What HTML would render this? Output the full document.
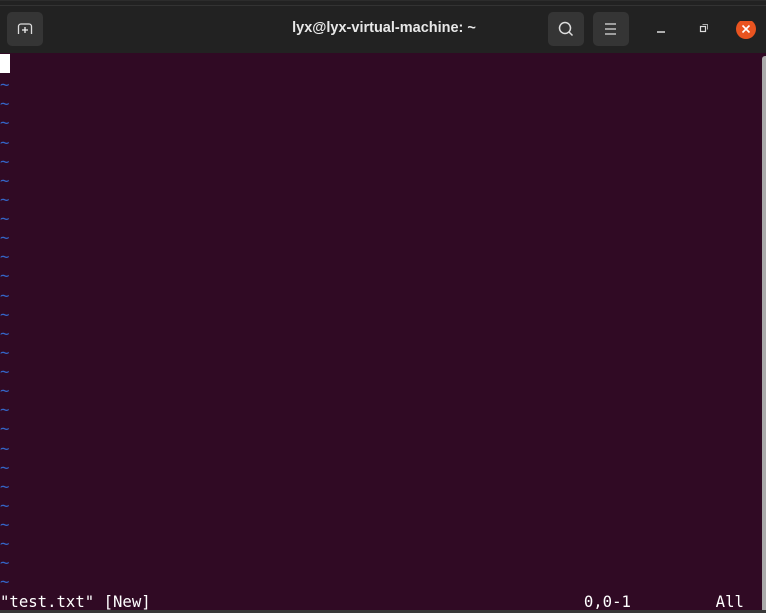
<!DOCTYPE html>
<html><head><style>
html,body{margin:0;padding:0;width:766px;height:613px;overflow:hidden;background:#300a24}
.hdr{position:absolute;left:0;top:0;width:766px;height:53px;background:#222;border-top:1px solid #2c2c2c;box-sizing:border-box}
.hdr .line{position:absolute;left:0;top:4px;width:766px;height:1px;background:#333}
.btn{position:absolute;top:11px;width:36px;height:34px;background:#353535;border-radius:5px}
.title{position:absolute;left:1px;width:766px;top:19px;text-align:center;color:#e8e8e8;font:bold 14.5px "Liberation Sans",sans-serif}
.term{position:absolute;left:0;top:56px;font:15.65px "DejaVu Sans Mono",monospace;line-height:19.12px;color:#fff;white-space:pre}
.t{color:#3466c8}
.cur{display:inline-block;width:10px;height:19px;background:#fff;vertical-align:top;margin-top:-2px}
.sb{position:absolute;left:762px;top:56px;width:4px;height:557px;background:#aaa;border-radius:3px 0 0 0}
.bot{position:absolute;left:0;top:610px;width:766px;height:3px;background:#3a3a3a}
</style></head><body>
<div class="hdr"><div class="line"></div>
<div class="btn" style="left:7px"><svg width="36" height="34"><path d="M11.5 22v-7.5a2.5 2.5 0 0 1 2.5-2.5h8a2.5 2.5 0 0 1 2.5 2.5V22" fill="none" stroke="#ddd" stroke-width="1.3"/><path d="M18 15v6M15 18h6" stroke="#eee" stroke-width="1.3"/></svg></div>
<div class="title">lyx@lyx-virtual-machine: ~</div>
<div class="btn" style="left:548px"><svg width="36" height="34"><circle cx="17" cy="16" r="5.5" fill="none" stroke="#ddd" stroke-width="1.5"/><path d="M21 20l3.5 3.5" stroke="#ddd" stroke-width="1.5"/></svg></div>
<div class="btn" style="left:593px"><svg width="36" height="34"><path d="M12 12h11M12 17h11M12 22h11" stroke="#ddd" stroke-width="1.3"/></svg></div>
<svg style="position:absolute;left:650px;top:20px" width="110" height="20"><path d="M7 11h8" stroke="#ddd" stroke-width="1.5"/><rect x="50.5" y="5.5" width="5" height="5" fill="none" stroke="#ddd" stroke-width="1.2"/><path d="M52.5 3.5h5v5" fill="none" stroke="#aaa" stroke-width="1"/><circle cx="96" cy="8" r="10" fill="#e95420"/><path d="M92.5 4.5l7 7M99.5 4.5l-7 7" stroke="#fff" stroke-width="1.6"/></svg>
</div>
<div class="term"><span class="cur"></span>
<span class="t">~
~
~
~
~
~
~
~
~
~
~
~
~
~
~
~
~
~
~
~
~
~
~
~
~
~
~</span>
"test.txt" [New]                                              0,0-1         All</div>
<div class="sb"></div>
<div class="bot"></div>
</body></html>
